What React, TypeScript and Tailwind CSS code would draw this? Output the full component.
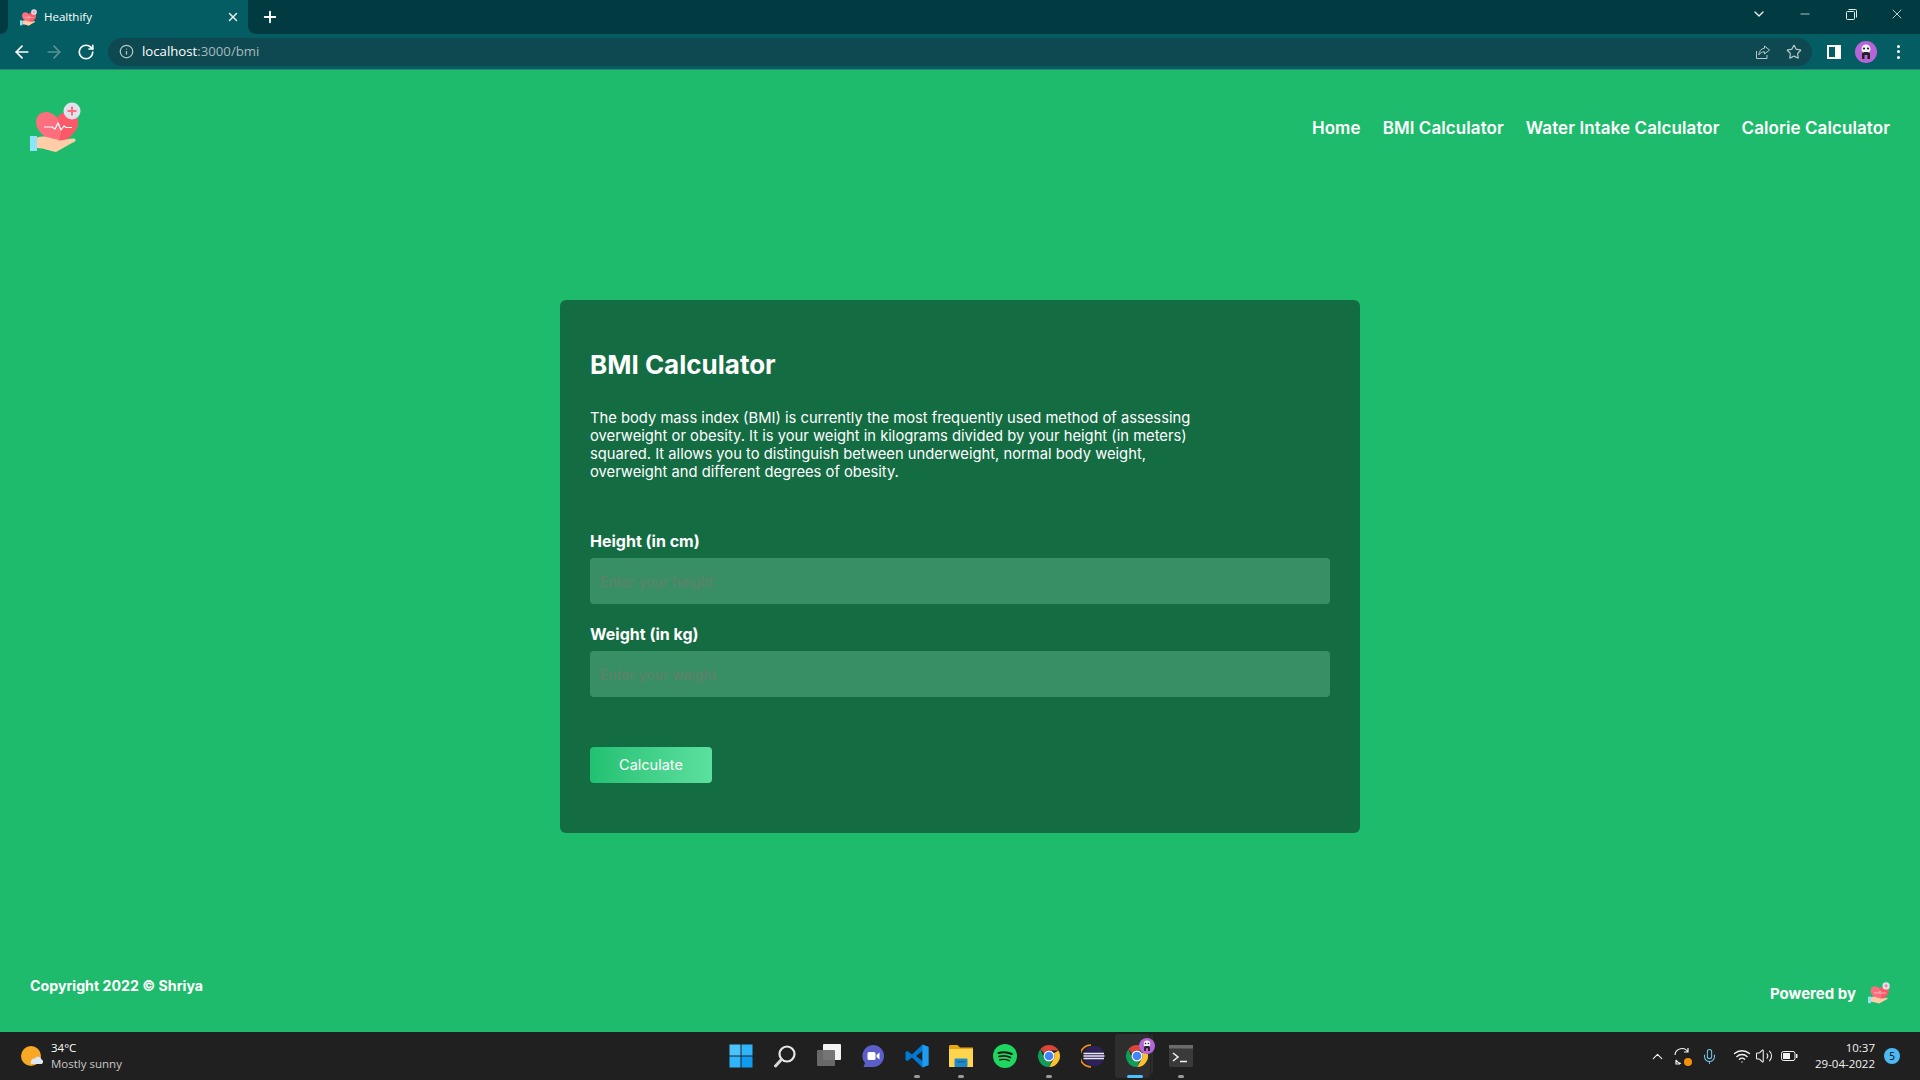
import { ArrowLeft, ArrowRight, ChevronDown, ChevronUp, Info, Mic, Minus, Plus, RotateCw, Star, Volume2, Wifi, X } from 'lucide-react';

// logo: heart held by a hand
const Logo = ({ size }: { size: number }) => (
  <svg width={size} height={size} viewBox="0 0 51 51" fill="none">
    <path d="M27 43C17 37 6 30 6 20C6 13.500 11 10 16 10C20.500 10 24.500 12.500 27 16C29.500 12.500 33.500 10 38 10C44 10 48 14.500 48 21C48 30 37 38 27 43Z" fill="#FD6F7E" />
    <path d="M27 16C29.500 12.500 33.500 10 38 10C44 10 48 14.500 48 21C48 30 37 38 27 43C32 33 33 24 27 16Z" fill="#FB5968" />
    <path d="M14 25H22L25 27L28 21L31 28L34 24L36 25.500H42" stroke="#fff" strokeWidth="1.200" strokeLinejoin="round" />
    <circle cx="42" cy="9" r="8.500" fill="#E0E2EE" />
    <path d="M42 4.500V13.500M37.500 9H46.500" stroke="#FD6F7E" strokeWidth="2" />
    <path d="M7 35.500C11 34 15 34 19 35.500C23 37 27 37 29 38.500C33 38.500 39 36.500 44 36.500C46 36.500 46 39.500 44 40C38 43 33 46 26 50C20 49 14 46 7 46Z" fill="#FFCDA8" />
    <rect x="0" y="34" width="7" height="15" fill="#8FE3FB" />
  </svg>
);

const ChromeIcon = ({ size }: { size: number }) => (
  <svg width={size} height={size} viewBox="0 0 24 24">
    <path d="M12 1A11 11 0 0 1 21.530 6.500H12A5.500 5.500 0 0 0 7 9.500L3.500 5A11 11 0 0 1 12 1Z" fill="#DB4437" />
    <path d="M21.530 6.500A11 11 0 0 1 12 23L16.800 14.750A5.500 5.500 0 0 0 16.800 9.250Z" fill="#FBC02D" />
    <path d="M12 23A11 11 0 0 1 3.500 5L7.200 14.750A5.500 5.500 0 0 0 12 17.500L14.500 17Z" fill="#0F9D58" />
    <circle cx="12" cy="12" r="5.500" fill="#fff" />
    <circle cx="12" cy="12" r="4.300" fill="#4285F4" />
  </svg>
);

const Avatar = ({ size }: { size: number }) => (
  <svg width={size} height={size} viewBox="0 0 22 22">
    <circle cx="11" cy="11" r="11" fill="#B565D8" />
    <circle cx="11" cy="8" r="4.500" fill="#F2F2F2" />
    <circle cx="9" cy="7.500" r="1.100" fill="#222" />
    <circle cx="13" cy="7.500" r="1.100" fill="#222" />
    <path d="M7 18V13C7 11.500 8.500 11 11 11C13.500 11 15 11.500 15 13V18H12.500V14H9.500V18Z" fill="#222" />
  </svg>
);

const TaskbarIcons = () => (
  <div className="flex items-center h-12">
    {/* start */}
    <div className="w-11 h-12 flex items-center justify-center">
      <svg width="24" height="24" viewBox="0 0 24 24">
        <rect x="0.500" y="0.500" width="11" height="11" fill="#4CC2FF" />
        <rect x="12.500" y="0.500" width="11" height="11" fill="#2FB4FA" />
        <rect x="0.500" y="12.500" width="11" height="11" fill="#2FB4FA" />
        <rect x="12.500" y="12.500" width="11" height="11" fill="#0F9BF0" />
      </svg>
    </div>
    {/* search */}
    <div className="w-11 h-12 flex items-center justify-center">
      <svg width="24" height="24" viewBox="0 0 24 24" fill="none">
        <circle cx="14" cy="10" r="7.500" stroke="#E8E8E8" strokeWidth="2.200" />
        <path d="M8.500 15.500L2.500 22" stroke="#D8D8D8" strokeWidth="3" strokeLinecap="round" />
      </svg>
    </div>
    {/* task view */}
    <div className="w-11 h-12 flex items-center justify-center">
      <svg width="24" height="24" viewBox="0 0 24 24">
        <rect x="6" y="0" width="18" height="16" rx="1" fill="#F2F2F2" />
        <rect x="0" y="6" width="18" height="16" rx="1" fill="#6E6E6E" fillOpacity="0.950" />
      </svg>
    </div>
    {/* teams chat */}
    <div className="w-11 h-12 flex items-center justify-center">
      <svg width="24" height="24" viewBox="0 0 24 24">
        <path d="M12 1A11 11 0 1 1 12 23H2.500L4 19A11 11 0 0 1 12 1Z" fill="#5B5FC7" />
        <rect x="6.500" y="8" width="8" height="8" rx="1.500" fill="#fff" />
        <path d="M15.500 11L18.500 8.500V15.500L15.500 13Z" fill="#fff" />
      </svg>
    </div>
    {/* vs code */}
    <div className="relative w-11 h-12 flex items-center justify-center">
      <svg width="24" height="24" viewBox="0 0 24 24">
        <path d="M17.500 0.500L23.500 3V21L17.500 23.500L7 13.500L2.500 17L0.500 16V8L2.500 7L7 10.500Z" fill="#0078D4" />
        <path d="M17.500 7L11 12L17.500 17Z" fill="#202020" />
        <path d="M17.500 0.500L23.500 3V21L17.500 23.500Z" fill="#1F9CF0" />
      </svg>
      <span className="absolute bottom-[2px] w-[6px] h-[3px] rounded-full bg-[#9a9a9a]" />
    </div>
    {/* file explorer */}
    <div className="relative w-11 h-12 flex items-center justify-center">
      <svg width="24" height="24" viewBox="0 0 24 24">
        <path d="M0 2.500C0 1.500 0.500 1 1.500 1H8.500L11 3.500H24V22H0Z" fill="#E8A80C" />
        <rect x="0" y="5" width="24" height="18" fill="#FFD54F" />
        <rect x="5.500" y="14.500" width="13" height="8.500" rx="1" fill="#1E88C9" />
        <rect x="8" y="17" width="8" height="1.500" fill="#0F6AA5" />
      </svg>
      <span className="absolute bottom-[2px] w-[6px] h-[3px] rounded-full bg-[#9a9a9a]" />
    </div>
    {/* spotify */}
    <div className="w-11 h-12 flex items-center justify-center">
      <svg width="24" height="24" viewBox="0 0 24 24" fill="none">
        <circle cx="12" cy="12" r="12" fill="#1ED760" />
        <path d="M5.500 9C10 7.700 14.500 8 18.800 10" stroke="#191414" strokeWidth="2" strokeLinecap="round" />
        <path d="M6 12.500C10 11.500 13.800 11.800 17.500 13.500" stroke="#191414" strokeWidth="1.700" strokeLinecap="round" />
        <path d="M6.800 15.800C10 15 13.200 15.200 16.200 16.700" stroke="#191414" strokeWidth="1.400" strokeLinecap="round" />
      </svg>
    </div>
    {/* chrome */}
    <div className="relative w-11 h-12 flex items-center justify-center">
      <ChromeIcon size={24} />
      <span className="absolute bottom-[2px] w-[6px] h-[3px] rounded-full bg-[#9a9a9a]" />
    </div>
    {/* eclipse */}
    <div className="w-11 h-12 flex items-center justify-center">
      <svg width="24" height="24" viewBox="0 0 24 24" fill="none">
        <path d="M10 1A11 11 0 0 0 10 23" stroke="#F7941E" strokeWidth="1.600" />
        <circle cx="13" cy="12" r="10.500" fill="#2C2255" />
        <path d="M2.500 9.500H23M2.500 12H23.500M2.500 14.500H23" stroke="#E8E6F0" strokeWidth="1.300" />
      </svg>
    </div>
    {/* chrome with profile, running */}
    <div className="relative w-11 h-12 flex items-center justify-center">
      <div className="absolute left-0 top-[2px] bottom-[2px] w-[35px] rounded bg-[#2E2E2E]" />
      <div className="absolute left-[36px] top-[2px] h-[40px] w-[2px] rounded-r bg-[#2E2E2E]" />
      <div className="relative">
        <ChromeIcon size={24} />
        <div className="absolute -top-[6px] -right-[6px]">
          <Avatar size={16} />
        </div>
      </div>
      <span className="absolute bottom-[2px] left-[12px] w-4 h-[3px] rounded-full bg-[#4CC2FF]" />
    </div>
    {/* terminal */}
    <div className="relative w-11 h-12 flex items-center justify-center">
      <svg width="24" height="24" viewBox="0 0 24 24" fill="none">
        <rect x="0" y="1" width="24" height="22" rx="1.500" fill="#3A3A3A" />
        <rect x="0" y="1" width="24" height="3.500" fill="#6B6B6B" />
        <path d="M4 9L9 13L4 17" stroke="#F2F2F2" strokeWidth="1.500" />
        <path d="M11 17.500H18" stroke="#F2F2F2" strokeWidth="1.500" />
      </svg>
      <span className="absolute bottom-[2px] w-[6px] h-[3px] rounded-full bg-[#9a9a9a]" />
    </div>
  </div>
);

const BrowserChrome = () => (
  <div className="h-[70px] bg-[#045D63] text-white font-['Open_Sans',sans-serif]">
    <div className="h-[34px] flex">
      <div className="w-2 rounded-br-lg bg-[#023A41]" />
      <div className="w-60 rounded-t-lg flex items-center pl-3 pr-2 bg-[#045D63]">
        <Logo size={17} />
        <span className="ml-[7px] text-[11.500px] flex-1">Healthify</span>
        <X size={14} strokeWidth={2.500} className="text-[#E6EFF0]" />
      </div>
      <div className="flex-1 rounded-bl-lg bg-[#023A41] flex items-center pl-[13px]">
        <Plus size={18} strokeWidth={2.500} />
        <div className="ml-auto flex items-center self-start h-7 text-[#E6EFF0]">
          <ChevronDown size={16} className="mr-[15px]" />
          <div className="w-[46px] flex justify-center"><Minus size={14} strokeWidth={1.300} /></div>
          <div className="w-[46px] flex justify-center">
            <svg width="11" height="11" viewBox="0 0 11 11" fill="none" stroke="currentColor">
              <rect x="0.500" y="2.500" width="8" height="8" rx="1" />
              <path d="M2.500 0.500H9.500A1 1 0 0 1 10.500 1.500V8.500" />
            </svg>
          </div>
          <div className="w-[46px] flex justify-center"><X size={16} strokeWidth={1.200} /></div>
        </div>
      </div>
    </div>
    <div className="h-9 flex items-center border-b border-[#2A8478]">
      <div className="w-[108px] flex items-center pl-3">
        <ArrowLeft size={20} />
        <ArrowRight size={20} className="ml-3 text-[#5B9297]" />
        <RotateCw size={18} strokeWidth={2.200} className="ml-[13px]" />
      </div>
      <div className="w-[1704px] h-7 rounded-full bg-[#0E4850] flex items-center pl-[11px] pr-[10px]">
        <Info size={15} className="text-[#B4C7CA]" />
        <span className="ml-2 text-[13.200px]">localhost<span className="text-[#A5BBBE]">:3000/bmi</span></span>
        <svg className="ml-auto text-[#B4C7CA]" width="16" height="16" viewBox="0 0 16 16" fill="none" stroke="currentColor">
          <path d="M1.500 7V14.500H12V11" />
          <path d="M9.500 2L14.500 6L9.500 10V7.800C7 7.800 5 9 3.800 11C4 7.500 6 4.500 9.500 4.200Z" />
        </svg>
        <Star size={16} strokeWidth={1.800} className="ml-[15px] text-[#B4C7CA]" />
      </div>
      <div className="flex-1 flex items-center pl-[15px]">
        <div className="w-[14px] h-[14px] border-[2px] border-white border-r-[6px] bg-[#045D63]" />
        <div className="ml-[14px]"><Avatar size={22} /></div>
        <div className="ml-5 flex flex-col gap-[2.500px]">
          <span className="w-[3px] h-[3px] rounded-full bg-white" />
          <span className="w-[3px] h-[3px] rounded-full bg-white" />
          <span className="w-[3px] h-[3px] rounded-full bg-white" />
        </div>
      </div>
    </div>
  </div>
);

const Taskbar = () => (
  <div className="h-12 bg-[#202020] grid grid-cols-[719px_auto_1fr] text-white font-['Open_Sans',sans-serif]">
    <div className="flex items-center pl-[21px]">
      <svg width="22" height="22" viewBox="0 0 22 22">
        <circle cx="10" cy="11" r="10" fill="#F9A825" />
        <path d="M10 19C9 15.500 11.500 13 14 13.500C15 11 20 11 20.500 14.500C23 15 22.500 19 20 19Z" fill="#DCE7F2" />
      </svg>
      <div className="ml-2 flex flex-col text-[11.500px] leading-[16px]">
        <span>34°C</span>
        <span className="text-[#C8C8C8]">Mostly sunny</span>
      </div>
    </div>
    <TaskbarIcons />
    <div className="flex items-center justify-end text-[#F2F2F2]">
      <ChevronUp size={17} strokeWidth={1.600} />
      <div className="relative ml-[7px]">
        <svg width="18" height="18" viewBox="0 0 18 18" fill="none" stroke="currentColor" strokeWidth="1.200">
          <path d="M2 8A7 7 0 0 1 15 5M15 1V5H11" />
          <path d="M3 13V17H7M3 13A7 7 0 0 0 8 16.500" />
        </svg>
        <span className="absolute -right-[1px] -bottom-[1px] w-2 h-2 rounded-full bg-[#F79009]" />
      </div>
      <Mic size={17} strokeWidth={1.500} className="ml-[10px] text-[#73C7E6]" />
      <Wifi size={18} strokeWidth={1.800} className="ml-[15px]" />
      <Volume2 size={18} strokeWidth={1.400} className="ml-[4px]" />
      <svg className="ml-[8px]" width="17" height="12" viewBox="0 0 17 12" fill="none">
        <rect x="0.500" y="1.500" width="13.500" height="9" rx="2" stroke="currentColor" />
        <rect x="2" y="3" width="7" height="6" fill="currentColor" />
        <rect x="15" y="4" width="1.500" height="4" fill="currentColor" />
      </svg>
      <div className="ml-[17px] flex flex-col items-end text-[11.500px] leading-[16px]">
        <span>10:37</span>
        <span>29-04-2022</span>
      </div>
      <div className="ml-[9px] mr-5 w-4 h-4 rounded-full bg-[#4CB9F5] flex items-center justify-center text-[10px] text-black">5</div>
    </div>
  </div>
);

const Field = ({ label, placeholder }: { label: string; placeholder: string }) => (
  <div>
    <label className="block text-base leading-5 font-bold text-white">{label}</label>
    <input
      placeholder={placeholder}
      className="mt-[7px] block w-full h-[46px] rounded bg-[#398F65] px-[10px] text-sm placeholder:text-[#617F6E] outline-none"
    />
  </div>
);

const App = () => {
  return (
    <div className="w-[1920px] h-[1080px] overflow-hidden flex flex-col bg-[#1EBB6C]">
      <BrowserChrome />

      <div className="flex-1 flex flex-col text-white font-['Inter',sans-serif]">
        {/* Navbar */}
        <header className="h-[116px] px-[30px] flex items-center justify-between">
          <div className="-mt-[2px]"><Logo size={51} /></div>
          <nav className="pt-[2px] flex items-center gap-[22px] text-[17px] tracking-[0.08px] font-semibold">
            <a href="#">Home</a>
            <a href="#">BMI Calculator</a>
            <a href="#">Water Intake Calculator</a>
            <a href="#">Calorie Calculator</a>
          </nav>
        </header>

        {/* Calculator card */}
        <main className="pt-[114px] flex justify-center">
          <div className="w-[800px] h-[533px] rounded-md bg-[#146C43] p-[30px]">
            <h1 className="mt-[19px] text-[26px] leading-8 font-bold">BMI Calculator</h1>
            <p className="mt-[28px] text-[14.750px] leading-[18px]">
              The body mass index (BMI) is currently the most frequently used method of assessing
              <br />
              overweight or obesity. It is your weight in kilograms divided by your height (in meters)
              <br />
              squared. It allows you to distinguish between underweight, normal body weight,
              <br />
              overweight and different degrees of obesity.
            </p>
            <div className="mt-[50px] flex flex-col gap-5">
              <Field label="Height (in cm)" placeholder="Enter your height" />
              <Field label="Weight (in kg)" placeholder="Enter your weight" />
            </div>
            <button className="mt-[50px] w-[122px] h-9 rounded bg-gradient-to-r from-[#20C172] to-[#5BE09F] text-[14.500px]">
              Calculate
            </button>
          </div>
        </main>

        {/* Footer */}
        <footer className="mt-auto h-[47px] px-[30px] flex justify-between text-[15px] font-bold">
          <span className="-mt-[10px] text-[14.200px]">Copyright 2022 © Shriya</span>
          <div className="-mt-[2px] flex items-start">
            <span>Powered by</span>
            <div className="ml-3 -mt-[1px]"><Logo size={22} /></div>
          </div>
        </footer>
      </div>

      <Taskbar />
    </div>
  );
};

export default App;
